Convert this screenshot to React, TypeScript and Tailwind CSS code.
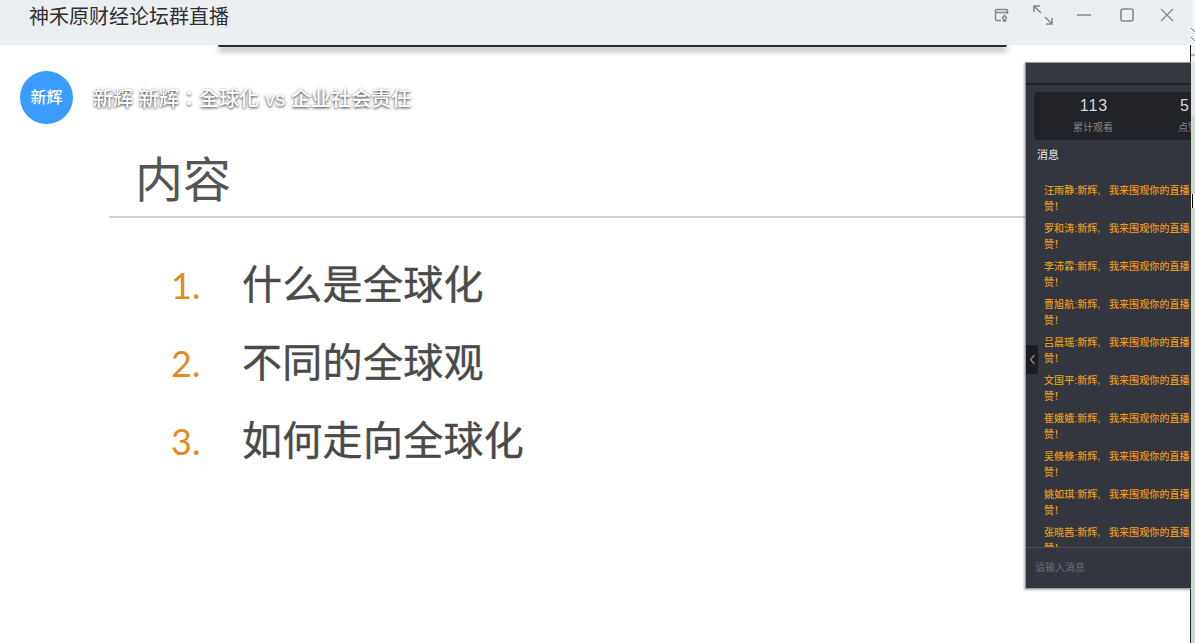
const cjk = "font-['Liberation_Sans','Noto_Sans_CJK_SC',sans-serif]";

const names = ["汪雨静", "罗和涛", "李沛霖", "曹旭航", "吕晨瑶", "文国平", "崔娥娥", "吴倏倏", "姚如琪", "张晓茜"];

function TitleIcons() {
  return (
    <div className="flex items-center text-[#7f8a96]">
      <svg width="18" height="18" viewBox="0 0 18 18" fill="none" stroke="currentColor" strokeWidth="1.5" className="mr-[21px]">
        <path d="M8 14.5H3.5a1 1 0 0 1-1-1v-9a1 1 0 0 1 1-1h10a1 1 0 0 1 1 1V8" />
        <path d="M2.500 6.500h12" />
        <path d="M9 12.500l2.500-3 2.500 3M10.500 12.500v2.500h2v-2.500" />
      </svg>
      <svg width="22" height="22" viewBox="0 0 22 22" fill="none" stroke="currentColor" strokeWidth="1.6" className="mr-[22px]">
        <path d="M2 8V2h6M2 2l7 7M20 14v6h-6M20 20l-7-7" />
      </svg>
      <svg width="16" height="16" viewBox="0 0 16 16" fill="none" stroke="currentColor" strokeWidth="1.5" className="mr-[28px]">
        <path d="M1 8h14" />
      </svg>
      <svg width="14" height="14" viewBox="0 0 14 14" fill="none" stroke="currentColor" strokeWidth="1.6" className="mr-[26px]">
        <rect x="1" y="1" width="12" height="12" rx="2" />
      </svg>
      <svg width="14" height="14" viewBox="0 0 14 14" fill="none" stroke="currentColor" strokeWidth="1.3">
        <path d="M1 1l12 12M13 1L1 13" />
      </svg>
    </div>
  );
}

function LiveChat() {
  return (
    <div className="absolute left-[1025px] top-[62px] h-[527px] w-[166px] overflow-hidden border-l border-t border-b border-[#9a9a9a] bg-[#33363e] shadow-[-1px_1px_2px_rgba(0,0,0,0.3)]">
      <div className="h-[22px] border-b-2 border-[#202227] bg-[#35383f]" />
      <div className="mx-[8px] mt-[7px] flex h-[48px] w-[170px] rounded-sm bg-[#212329] pt-[4px] text-center">
        <div className="w-[120px]">
          <div className="text-[16px] leading-[20px] font-medium text-[#d8d8d8] tracking-[1px]">113</div>
          <div className="mt-[4px] pr-[2px] text-[10px] leading-[16px] text-[#85878c]">累计观看</div>
        </div>
        <div className="w-[50px] text-left pl-[26px]">
          <div className="text-[16px] leading-[20px] font-medium text-[#d8d8d8]">5</div>
          <div className="mt-[4px] -ml-[2px] text-[10px] leading-[16px] text-[#85878c] whitespace-nowrap">点赞</div>
        </div>
      </div>
      <div className="pl-[11px] pt-[7px] text-[11px] leading-[16px] font-medium text-[#d5d6d8]">消息</div>
      <div className="mt-[20px] h-[364px] overflow-hidden pl-[18px]">
        {names.map((name) => (
          <div key={name} className="mb-[6px] w-[160px] text-[10px] leading-[16px] font-medium tracking-[0.1px] text-[#e39c1e]">
            <div className="whitespace-nowrap">{name}:新辉,&nbsp;&nbsp;&nbsp;我来围观你的直播</div>
            <div>赞！</div>
          </div>
        ))}
      </div>
      <div className="border-t border-[#494c53] pl-[9px] pt-[12px] text-[10px] leading-[16px] text-[#6c6f75]">请输入消息</div>
      <div className="absolute left-0 top-[282px] flex h-[29px] w-[12px] items-center justify-center rounded-r-[3px] bg-[#1c1d21]">
        <svg width="7" height="11" viewBox="0 0 7 11" fill="none" stroke="#8b8d92" strokeWidth="1.2">
          <path d="M5.500 1L1.500 5.500l4 4.500" />
        </svg>
      </div>
    </div>
  );
}

// the sliver of another window showing down the right edge
function RightEdge() {
  return (
    <>
      <div className="absolute left-[1191px] top-0 z-20 h-[62px] w-[4px] bg-[#f1f2f3]">
        <svg width="4" height="62" viewBox="0 0 4 62" fill="none" stroke="#555" strokeWidth="0.8">
          <path d="M0 28l4 4M0 37l4 4M0 55h4" />
        </svg>
      </div>
      <div className="absolute left-[1191px] top-[62px] z-20 h-[53px] w-[4px] bg-[#dfe4e6]" />
      <div className="absolute left-[1191px] top-[115px] z-20 h-[528px] w-[4px] bg-[#c5dccb]" />
      <div className="absolute left-[1191px] top-[194px] z-20 h-[14px] w-[4px] bg-white">
        <div className="ml-[1px] h-[14px] w-px bg-black" />
      </div>
      <div className="absolute left-[1190px] top-[45px] z-20 h-[17px] w-px bg-[#222]" />
      <div className="absolute left-[1190px] top-[589px] z-20 h-[54px] w-px bg-[#222]" />
    </>
  );
}

export default function App() {
  return (
    <div className={`relative h-[643px] w-[1195px] overflow-hidden bg-white ${cjk}`}>
      <div className="relative z-10 flex h-[45px] items-start justify-between bg-[#ebeff2] pl-[29px] pr-[21px]">
        <div className="pt-[3px] text-[20px] leading-[28px] text-[#303030]">神禾原财经论坛群直播</div>
        <div className="pt-[4px]">
          <TitleIcons />
        </div>
      </div>
      <div className="ml-[218px] h-0 w-[789px]">
        <div className="h-[2px] rounded-b bg-[#2c2c2c] shadow-[0_3px_6px_rgba(0,0,0,0.75)]" />
      </div>

      <div className="flex items-center pl-[20px] pt-[26px]">
        <div className="flex h-[53px] w-[53px] items-center justify-center rounded-full bg-[#3b9bff] text-[16px] font-medium text-white">新辉</div>
        <div className="ml-[20px] pt-[2px] font-['Liberation_Sans','Noto_Sans_CJK_TC',sans-serif] text-[20px] tracking-[0.1px] font-medium text-white [text-shadow:0_1px_3px_rgba(0,0,0,0.85)]">新辉 新辉：全球化 vs 企业社会责任</div>
      </div>

      <div className="ml-[109px] mt-[18px] h-[76px] w-[920px] border-b-2 border-[#cfcfcf] pl-[26px] pt-[6px]">
        <div className="text-[48px] leading-[56px] text-[#555555] font-['Noto_Sans_CJK_SC',sans-serif]">内容</div>
      </div>

      <div className="ml-[171px] mt-[47px] flex flex-col gap-[38px]">
        {[
          ["1.", "什么是全球化"],
          ["2.", "不同的全球观"],
          ["3.", "如何走向全球化"],
        ].map(([n, t]) => (
          <div key={n} className="flex h-[40px] items-center">
            <span className="w-[71px] text-[36px] text-[#e58a22] font-['Lato',sans-serif]">{n}</span>
            <span className="text-[40px] leading-[40px] tracking-[0.3px] text-[#4a4a4a] [-webkit-text-stroke:0.4px_#4a4a4a]">{t}</span>
          </div>
        ))}
      </div>

      <LiveChat />
      <RightEdge />
    </div>
  );
}
